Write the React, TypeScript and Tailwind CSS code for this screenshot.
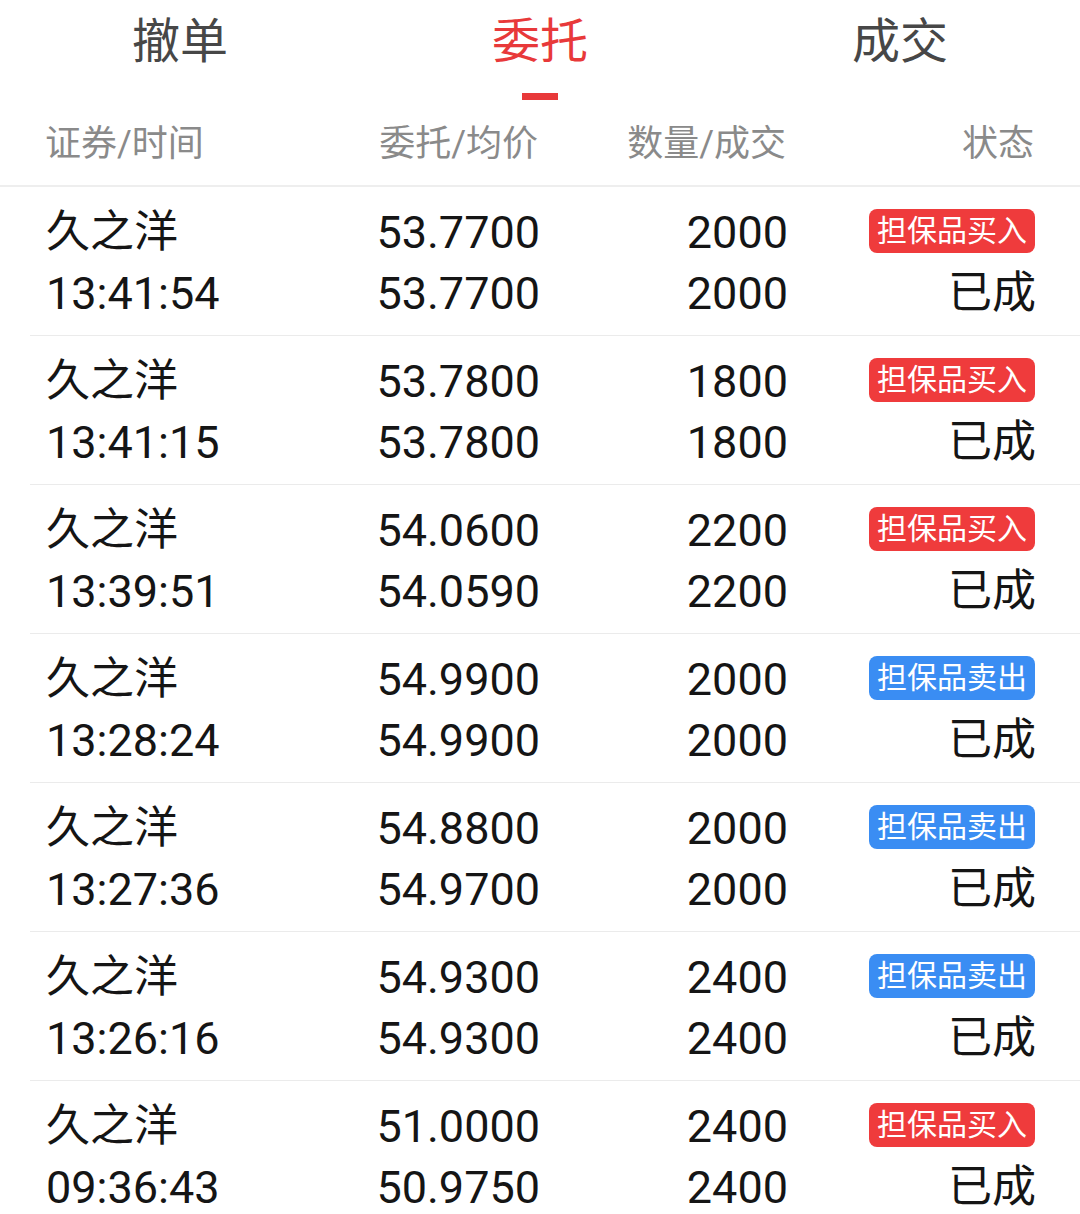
import React from 'react';

type Order = {
  name: string;
  time: string;
  price: string;
  avg: string;
  qty: string;
  done: string;
  side: 'buy' | 'sell';
};

const orders: Order[] = [
  { name: '久之洋', time: '13:41:54', price: '53.7700', avg: '53.7700', qty: '2000', done: '2000', side: 'buy' },
  { name: '久之洋', time: '13:41:15', price: '53.7800', avg: '53.7800', qty: '1800', done: '1800', side: 'buy' },
  { name: '久之洋', time: '13:39:51', price: '54.0600', avg: '54.0590', qty: '2200', done: '2200', side: 'buy' },
  { name: '久之洋', time: '13:28:24', price: '54.9900', avg: '54.9900', qty: '2000', done: '2000', side: 'sell' },
  { name: '久之洋', time: '13:27:36', price: '54.8800', avg: '54.9700', qty: '2000', done: '2000', side: 'sell' },
  { name: '久之洋', time: '13:26:16', price: '54.9300', avg: '54.9300', qty: '2400', done: '2400', side: 'sell' },
  { name: '久之洋', time: '09:36:43', price: '51.0000', avg: '50.9750', qty: '2400', done: '2400', side: 'buy' },
];

const tabs = ['撤单', '委托', '成交'];

export default function App() {
  return (
    <div
      className="w-[1080px] h-[1214px] overflow-hidden bg-white select-none"
      style={{ fontFamily: 'Roboto, "Noto Sans CJK SC", sans-serif' }}
    >
      {/* Tabs */}
      <div className="flex pt-[18px]">
        {tabs.map((t, i) => {
          const active = i === 1;
          return (
            <div key={t} className="flex-1 flex flex-col items-center">
              <span
                className={`text-[48px] leading-[48px] ${active ? 'text-[#e8393a]' : 'text-[#474747]'}`}
              >
                {t}
              </span>
              <div className={`mt-[27px] w-[36px] h-[7px] ${active ? 'bg-[#e8393a]' : 'bg-transparent'}`} />
            </div>
          );
        })}
      </div>

      {/* Column header */}
      <div className="flex pl-[45px] pr-[44px] pt-[26px] pb-[23px] border-b-2 border-[#eeeeee] text-[36px] leading-[36px] text-[#8a8a8a]">
        <div className="w-[250px]">证券/时间</div>
        <div className="w-[243px] text-right">委托/均价</div>
        <div className="w-[248px] text-right">数量/成交</div>
        <div className="w-[248px] text-right">状态</div>
      </div>

      {/* Rows */}
      {orders.map((o, i) => (
        <div key={i} className="ml-[30px] border-b border-[#ebebeb]">
          <div className="flex pl-[16px] pr-[44px] pt-[15px] pb-[11px] text-[44px] leading-[61px] text-[#151515]">
            <div className="w-[252px]">
              <div>{o.name}</div>
              <div className="text-[45px]">{o.time}</div>
            </div>
            <div className="w-[242px] text-right text-[45px]">
              <div>{o.price}</div>
              <div>{o.avg}</div>
            </div>
            <div className="w-[248px] text-right text-[45px]">
              <div>{o.qty}</div>
              <div>{o.done}</div>
            </div>
            <div className="w-[248px] flex flex-col items-end">
              <div className="h-[61px] flex items-center pb-[4px] pr-[1px]">
                <span
                  className={`h-[44px] px-[8px] rounded-lg text-white text-[30px] leading-[44px] ${
                    o.side === 'buy' ? 'bg-[#ef3b3c]' : 'bg-[#3a8df3]'
                  }`}
                >
                  {o.side === 'buy' ? '担保品买入' : '担保品卖出'}
                </span>
              </div>
              <div>已成</div>
            </div>
          </div>
        </div>
      ))}
    </div>
  );
}
